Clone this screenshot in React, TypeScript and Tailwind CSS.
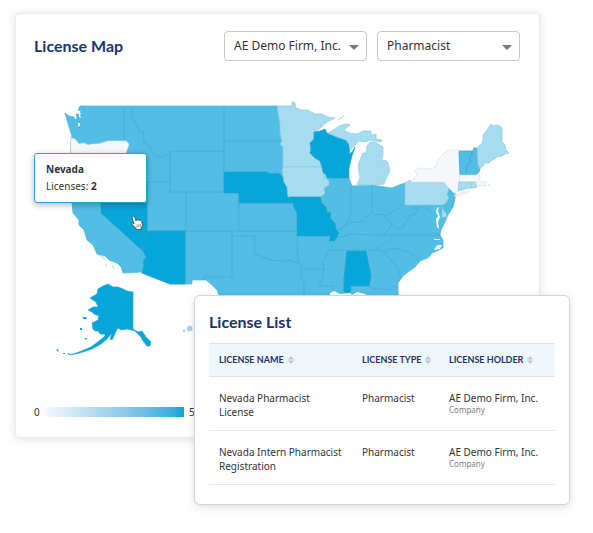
import { useState } from 'react';

const COLORS = {
  none: '#f6f7fb',
  low: '#a5dcf0',
  mid: '#53bee5',
  high: '#06a5da',
} as const;

type Level = keyof typeof COLORS;

// Lower 48, drawn as one mid level shape, other levels go on top of it
const MAINLAND =
  'M65 113L69 116 74 117 75 120 77 118 76 114 80 114 81 111 78 110 79 108 80 106H278L283 147 283 167 322 172 325 177 349 178 352 186 372 185 385 187 392 188 399 185 405 183 445 198 449 188 454 193 455 198 453 207 449 213 447 217 445 222 441 230 440 235 443 240 443 248 437 251 432 253 429 257 425 259 420 261 415 267 408 272 403 276 398 283 398 290 399 300H219V295L217 290 212 285 206 280H192V284H170L142 273 141 272 123 273 121 267 117 263 109 260 105 256 97 254 93 245 87 240 84 230 79 225 79 220 73 213 72 203 70 195 71 138 72 136 69 127 67 120Z';

const STATES: { id: string; level: Level; d: string }[] = [
  { id: 'OR', level: 'none', d: 'M71 138L75 139 79 144 84 143 88 145 92 144 98 144 108 141 126 141 129 144 126 153V182H71Z' },
  { id: 'NV', level: 'high', d: 'M101 182H147V239L142 240 143 251 101 213Z' },
  { id: 'AZ', level: 'high', d: 'M147 231H185V284H170L142 273 144 265 143 262 146 257 143 251 142 240 147 239Z' },
  { id: 'NE', level: 'high', d: 'M224 172H267L270 174 278 173 282 176 284 182 287 187 288 196 290 199 293 203H239V193H224Z' },
  { id: 'MN', level: 'low', d: 'M277 106H292V102L295 103 296 108 302 110 308 110 315 114 322 114 328 117 335 118 327 122 318 130 314 132V139L310 143 311 149 310 153 315 158 320 161 322 167H283V147L280 144 282 141 280 133 280 123 278 113Z' },
  { id: 'IA', level: 'low', d: 'M283 167H322L323 172 325 177 329 181 329 185 324 188 325 193 321 197H288L287 187 284 182 282 170Z' },
  { id: 'WI', level: 'high', d: 'M314 132L320 131 325 129 327 133 337 137 346 140 349 144 350 149 349 154 352 152 355 147 352 156 349 168 349 178H328L323 172 322 167 320 161 315 158 310 153 311 149 310 143 314 139Z' },
  { id: 'MI-upper', level: 'low', d: 'M328 133L335 129 339 126 346 124 350 125 345 129 344 131 350 133 357 134 363 131 371 131V135L376 134 376 139 382 140 381 142 370 140 365 142 359 141 354 146 350 150 349 144 346 140 337 137Z' },
  { id: 'MI-lower', level: 'low', d: 'M370 142L375 142 383 147 383 155 381 161 385 160 388 163 390 170 387 177 384 184 372 185H357L360 178 359 172 358 164 361 158 363 153 366 153 367 146Z' },
  { id: 'MO', level: 'high', d: 'M289 197H321L321 202 326 207 327 212 331 213 330 218 335 223 336 229 339 233 337 237 334 241H329L331 236H297V212L294 208 293 203Z' },
  { id: 'AL', level: 'high', d: 'M347 251H366L368 262 371 275 369 286H350L351 290 349 293 344 292V278Z' },
  { id: 'PA', level: 'low', d: 'M405 183L410 180 411 182H444L449 188 447 195 449 198 445 204 442 205H405Z' },
  { id: 'DE', level: 'low', d: 'M442 206L443 210 446 213 447 217H442Z' },
  { id: 'NY', level: 'none', d: 'M411 182L417 175 415 170 420 168 432 169 437 166 437 160 443 154 448 151 459 150V162L460 175 459 183 458 191 454 193 449 188 444 182Z' },
  { id: 'NY-island', level: 'none', d: 'M454 196L462 192 466 192 470 190 467 193 458 196Z' },
  { id: 'VT', level: 'mid', d: 'M459 151H473L470 158 471 162 467 165 466 175H460Z' },
  { id: 'NH', level: 'mid', d: 'M473 151L474 148H477L478 165 480 168 479 172 476 175H466L467 165 471 162 470 158Z' },
  { id: 'ME', level: 'low', d: 'M477 148L482 143 483 140 483 135 487 130 491 124 493 126 498 125 502 128V142L505 145 506 150 509 153 505 154 500 157 498 156 495 159 492 160 489 163 485 163 483 166 480 169 478 165Z' },
  { id: 'MA', level: 'none', d: 'M460 175H476L479 173 480 177 479 180 483 183 486 181 486 186 482 186 478 186 477 182H459Z' },
  { id: 'CT', level: 'low', d: 'M459 182H471V188L465 189 458 191Z' },
  { id: 'RI', level: 'low', d: 'M471 182H475L477 187 474 188 471 188Z' },
  { id: 'AK', level: 'high', d: 'M108 284L113 287 118 287 123 289 127 291 133 292V329L138 332 142 331 146 337 151 342 150 346H147L143 341 141 337 135 331 127 329 121 330 118 328 116 331 114 336 112 340 110 339 112 333 107 339 101 344 92 349 80 353 70 355 79 352 91 347 99 341 105 336 105 334 100 334 98 331 95 331 93 329 92 323 98 320 99 316 94 314 92 312 88 310 93 307 98 307 96 302 90 298 97 294 98 289 103 286Z' },
  { id: 'HI', level: 'low', d: 'M187 328L189 326 192 327 192 330 188 331ZM183 330L185 330 184 332Z' },
];

// State lines inside the mid level area
const BORDERS = [
  'M124 107V141M132 107V117L136 123 139 131 144 133 144 143 148 144 153 153 157 158 159 156 163 157 164 155H170',
  'M170 151H224M170 151V192M170 192H239V231M147 182H170M147 182V239M186 192V231M147 231H297',
  'M224 106V192M224 141H281M239 203H293M232 231V277H204L205 280',
  'M232 236H255V254L260 255 263 258 267 258 272 261 280 260 285 262 290 260 295 262 300 263M297 236L298 262M186 231V284',
  'M300 263L301 269H324M301 269V277L304 284 304 296M324 269L323 277 319 286H333L334 292',
  'M337 237L331 248 328 251 327 255 323 261 324 269M331 250H383M337 237L346 236 347 234 380 235H440',
  'M351 186V213L348 220 346 224 340 230 337 230M372 186V214M405 183V198L402 205 397 209 390 213 387 217 384 214 378 215 372 214 365 217 362 222 357 222 350 223 345 226 340 229',
  'M384 214L386 218 392 224 388 230 383 235M392 224L397 229 403 227 407 220 409 216 415 214 418 208 413 208 412 205M418 208L424 207 430 211 434 216',
  'M375 250L379 246 387 242 394 236M383 252L389 249 400 249 403 252 409 251 420 261M383 252L390 259 397 267 401 277',
  'M347 251L344 278V290M366 251L371 275 369 286 371 288 390 290 392 287H398',
  'M455 193V198L449 213M449 188L447 195 449 198 445 204M405 205H442V217H447',
];

const WATER =
  'M437 208L439 207 438 211 440 217 438 222 439 229 437 227 436 219 438 216 436 212ZM434 239H440V240H434ZM437 245L442 245 440 249 434 250ZM79 113H81L80 115 81 118 79 117ZM78 123H80V126H78ZM330 293L334 291 340 294 350 293 352 295 357 292 365 294 371 298H329Z';

const ISLANDS =
  'M82 317L84 319 87 319 86 317ZM80 328H82V330H80ZM84 338L86 340 87 338ZM56 350L59 352 58 349ZM63 353H65V354H63ZM67 353L69 355 71 354Z';

const LICENSES = [
  { name: 'Nevada Pharmacist License', type: 'Pharmacist', holder: 'AE Demo Firm, Inc.', kind: 'Company' },
  { name: 'Nevada Intern Pharmacist Registration', type: 'Pharmacist', holder: 'AE Demo Firm, Inc.', kind: 'Company' },
];

function Dropdown({ label, options }: { label: string; options: string[] }) {
  const [value, setValue] = useState(options[0]);

  return (
    <div className="relative w-[143px]">
      <select
        aria-label={label}
        value={value}
        onChange={(e) => setValue(e.target.value)}
        className="block h-[30px] w-full appearance-none rounded border border-[#c8c8c8] bg-white pl-[9px] pr-5 font-['Noto_Sans',sans-serif] text-[12px] text-[#333] focus:outline-none focus:border-[#06a5da]"
      >
        {options.map((option) => (
          <option key={option}>{option}</option>
        ))}
      </select>
      <svg viewBox="0 0 10 5" className="pointer-events-none absolute right-2 top-[14px] h-[5px] w-[10px]">
        <path d="M0 0h10L5 5z" fill="#777" />
      </svg>
    </div>
  );
}

function UsMap() {
  return (
    <svg viewBox="34 61 486 345" className="block h-auto w-full" role="img" aria-label="Licenses by state">
      <g strokeWidth="0.7" strokeLinejoin="round">
        <path d={MAINLAND} fill={COLORS.mid} stroke="#4bb4dc" />
        <path d={BORDERS.join('')} fill="none" stroke="#43a9d0" />
        {STATES.map((state) => (
          <path
            key={state.id}
            d={state.d}
            fill={COLORS[state.level]}
            stroke={state.level === 'none' ? '#dddfe3' : state.level === 'low' ? '#8ecbe1' : '#2fa3cb'}
          />
        ))}
        <path d={WATER} fill="#fff" />
        <path d={ISLANDS} fill={COLORS.high} />
        <path d="M98 254L105 259M105 265L107 266M112 265L114 269M338 120L344 116M488 184L490 186" stroke="#7ecbe6" />
      </g>
    </svg>
  );
}

function SortIcon() {
  return (
    <svg viewBox="0 0 6 8" className="h-2 w-[6px] shrink-0">
      <path d="M3 0l3 3.500H0zM3 8l3-3.500H0z" fill="#bdc5d5" />
    </svg>
  );
}

function LicenseMap() {
  return (
    <section className="rounded border border-[#e9ecf1] bg-white pl-[18px] pr-[19px] pt-[17px] pb-[19px] shadow-[0_1px_8px_rgba(0,0,0,0.12)]">
      <div className="flex items-center justify-between">
        <h2 className="text-[16px] leading-7 font-bold text-[#203468]">License Map</h2>
        <div className="flex gap-[10px]">
          <Dropdown label="Firm" options={['AE Demo Firm, Inc.']} />
          <Dropdown label="License type" options={['Pharmacist']} />
        </div>
      </div>

      <div className="relative">
        <UsMap />
        <div className="absolute left-0 top-[92px] flex h-[50px] w-[113px] flex-col justify-center rounded-[3px] border border-[#25a4cf] bg-white pl-[11px] font-['Noto_Sans',sans-serif] text-[10px] leading-[17px] text-[#333] shadow-[0_2px_6px_rgba(0,0,0,0.3)]">
          <strong>Nevada</strong>
          <span>
            Licenses: <strong>2</strong>
          </span>
        </div>
        <svg viewBox="0 0 12 16" className="absolute left-[97px] top-[154px] h-4 w-3">
          <path
            d="M1 2c0-1.500 2-1.500 2.500 0l1.500 4 .5-1c.8-.5 1.500-.2 1.800.5.600-.7 1.400-.5 1.800.3.800-.5 1.600 0 1.700.9l.7 4-1.500 2.300v1.500H5.500l-.6-1.500L1 9.500C.5 8.300 1.500 7.500 2.500 8.300L3 9z"
            fill="#fff"
            stroke="#444"
            strokeWidth="0.8"
          />
          <path d="M6 9.500v3M7.700 9.300v3M9.300 9v3" stroke="#555" strokeWidth="0.600" />
        </svg>
      </div>

      {/* Scale */}
      <div className="flex items-center font-['Noto_Sans',sans-serif] text-[10px] leading-3 text-[#333]">
        <span className="w-[11px]">0</span>
        <div className="h-[10px] w-[139px] bg-linear-to-r from-[#f6f8fb] to-[#06a5da]" />
        <span className="pl-[5px]">5</span>
      </div>
    </section>
  );
}

function LicenseList() {
  return (
    <section className="relative -mt-[143px] ml-[194px] mr-[23px] rounded-md border border-[#cbd5e2] bg-white px-[14px] pt-[14px] pb-[19px] shadow-[0_2px_10px_rgba(0,0,0,0.13)]">
      <h2 className="text-[16px] leading-6 font-bold text-[#203468]">License List</h2>
      <table className="mt-[9px] w-full table-fixed text-left font-['Noto_Sans',sans-serif] text-[10px] leading-[14px] text-[#333]">
        <thead>
          <tr className="h-[33px] border-y border-[#dbe4ee] bg-[#eff7fb] font-[Lato,sans-serif] text-[9px] text-[#203468]">
            <th className="w-[143px] pl-[10px]">
              <button className="flex items-center gap-1 font-bold">
                LICENSE NAME <SortIcon />
              </button>
            </th>
            <th className="w-[87px] pl-[10px]">
              <button className="flex items-center gap-1 font-bold">
                LICENSE TYPE <SortIcon />
              </button>
            </th>
            <th className="pl-[10px]">
              <button className="flex items-center gap-1 font-bold whitespace-nowrap">
                LICENSE HOLDER <SortIcon />
              </button>
            </th>
          </tr>
        </thead>
        <tbody>
          {LICENSES.map((license) => (
            <tr key={license.name} className="h-[54px] border-b border-[#e4e8f0] align-top">
              <td className="pl-[10px] pr-2 pt-[14px]">{license.name}</td>
              <td className="pl-[10px] pt-[14px]">{license.type}</td>
              <td className="pl-[10px] pt-[14px]">
                <div>{license.holder}</div>
                <div className="text-[8px] leading-[10px] text-[#808080]">{license.kind}</div>
              </td>
            </tr>
          ))}
        </tbody>
      </table>
    </section>
  );
}

export default function App() {
  return (
    <main className="min-h-screen bg-white pt-[13px] pb-7 font-[Lato,sans-serif]">
      <div className="ml-[15px] mr-[53px]">
        <LicenseMap />
      </div>
      <LicenseList />
    </main>
  );
}
